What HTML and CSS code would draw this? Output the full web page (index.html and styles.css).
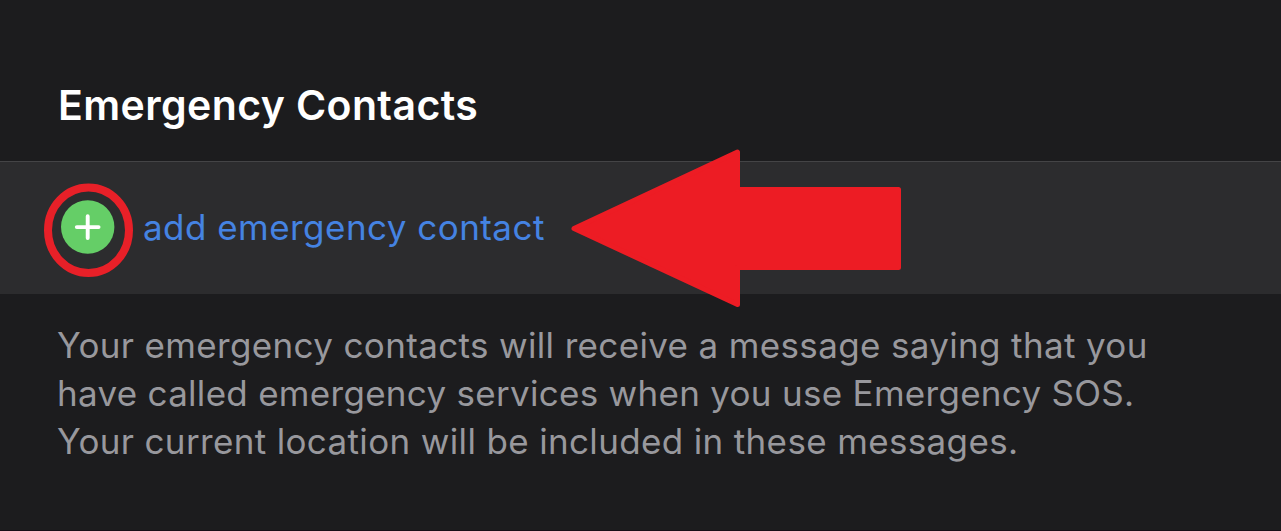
FILE: index.html
```html
<!DOCTYPE html>
<html lang="en">
<head>
<meta charset="utf-8">
<title>Emergency Contacts</title>
<link rel="stylesheet" href="styles.css">
</head>
<body>
<main class="section">
  <h1 class="title">Emergency Contacts</h1>
  <div class="row">
    <svg class="plus" viewBox="0 0 54 54" aria-hidden="true"><circle cx="26.700" cy="27" r="26.700" fill="#65ce67"/><path d="M26.700 16.200v21.800M15.800 27.100h21.800" stroke="#fff" stroke-width="3.900" stroke-linecap="round"/></svg>
    <a class="add">add emergency contact</a>
    <svg class="marks" viewBox="0 0 1281 531" aria-hidden="true">
      <ellipse cx="88.500" cy="230.300" rx="40.500" ry="42.700" fill="none" stroke="#e82028" stroke-width="8"/>
      <path d="M574 228.500L737.500 152V189.500H898.500V267.500H737.500V304.500Z" fill="#ed1c24" stroke="#ed1c24" stroke-width="5" stroke-linejoin="round"/>
    </svg>
  </div>
  <p class="note"><span class="line">Your emergency contacts will receive a message saying that you</span><span class="line middle">have called emergency services when you use Emergency SOS.</span><span class="line">Your current location will be included in these messages.</span></p>
</main>
</body>
</html>
```
FILE: styles.css
```css
body {
  margin: 0;
  background: #1c1c1e;
  font-family: Inter, "Liberation Sans", sans-serif;
  color: #fff;
}
.section {
  box-sizing: border-box;
  position: relative;
  height: 531px;
  overflow: hidden;
  border-bottom: 1px solid #170f16;
}
.title {
  box-sizing: border-box;
  height: 161px;
  margin: 0;
  padding: 80px 0 0 58px;
  font-size: 41px;
  line-height: 50px;
  font-weight: 600;
  letter-spacing: 0.4px;
  white-space: nowrap;
}
.row {
  box-sizing: border-box;
  display: flex;
  align-items: center;
  height: 133px;
  padding: 0 0 3px 61px;
  background: #2c2c2e;
  border-top: 1px solid #444446;
}
.plus {
  width: 54px;
  height: 54px;
}
.add {
  margin-left: 28px;
  font-size: 35px;
  line-height: 44px;
  letter-spacing: 0.46px;
  color: #4583e2;
  white-space: nowrap;
}
.marks {
  position: absolute;
  left: 0;
  top: 0;
  width: 1281px;
  height: 531px;
}
.note {
  margin: 0;
  padding: 27px 0 0 57px;
  font-size: 35px;
  line-height: 48px;
  letter-spacing: 0.35px;
  color: #98989d;
}
.line {
  display: block;
  white-space: nowrap;
}
.middle {
  letter-spacing: 0.29px;
}
```
